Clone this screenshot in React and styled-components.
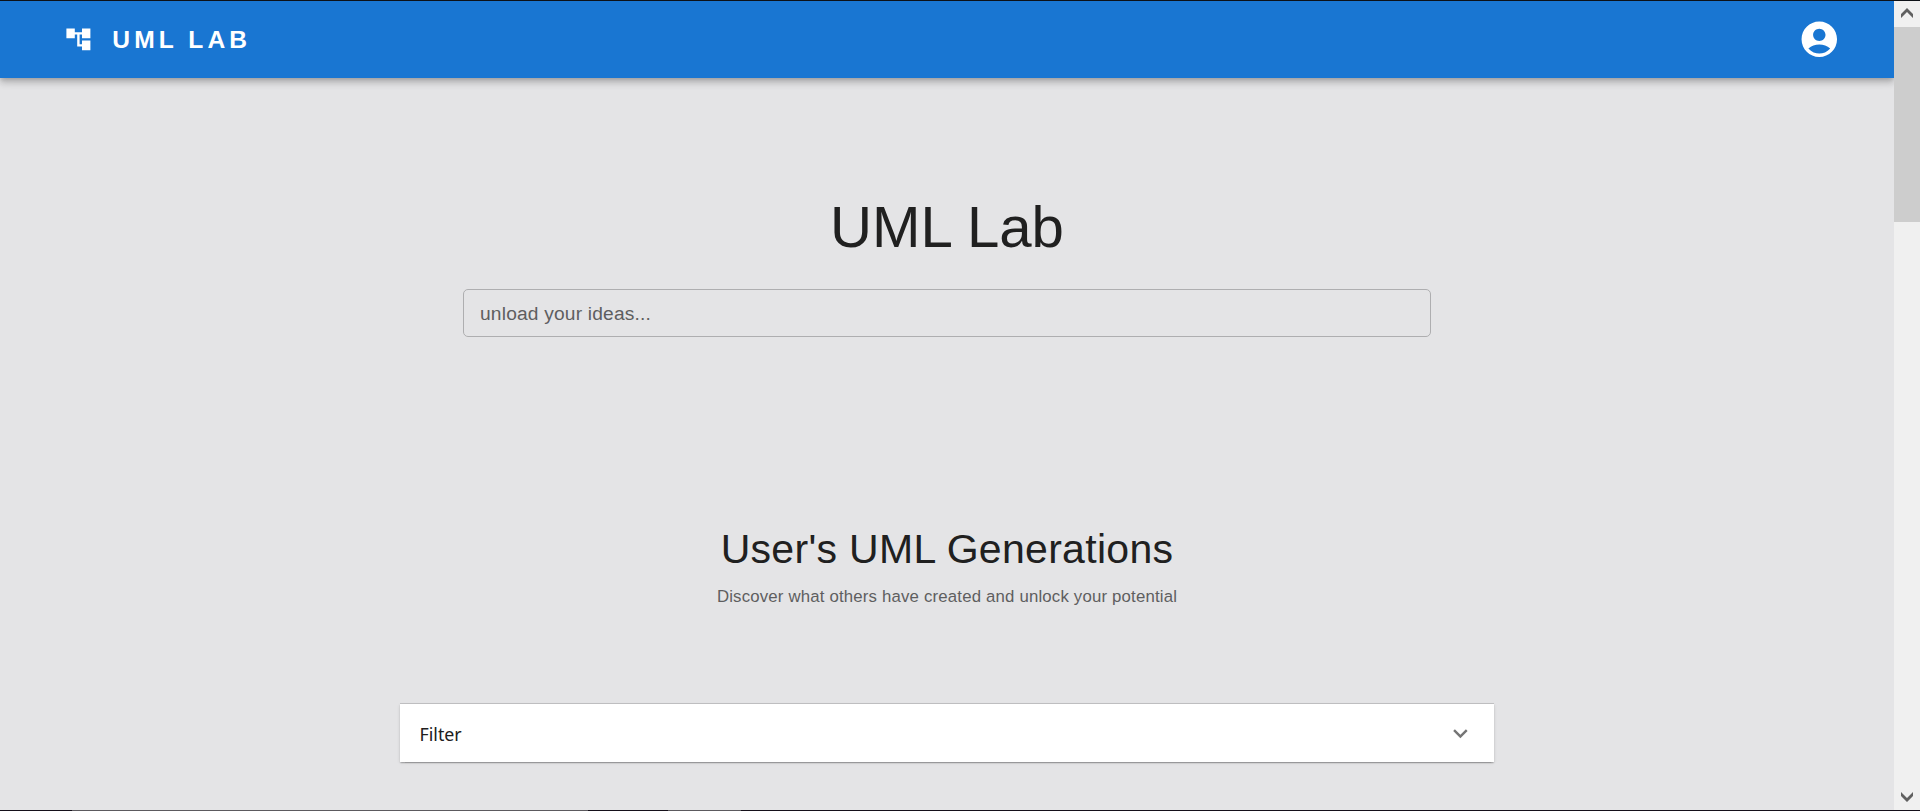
import React from "react";
import styled, { createGlobalStyle } from "styled-components";

const GlobalStyle = createGlobalStyle`
  *, *::before, *::after { box-sizing: border-box; }
  body {
    margin: 0;
    background: #e4e4e6;
    color: #202020;
    font-family: Arial, "Liberation Sans", sans-serif;
    overflow: hidden;
  }
`;

const Frame = styled.div`
  display: flex;
  flex-direction: column;
  height: 811px;
`;

const TopEdge = styled.div`
  flex: none;
  height: 1px;
  background: #0d1117;
`;

const BottomEdge = styled.div`
  flex: none;
  display: flex;
  height: 1px;
  background: #15101a;
`;

const EdgeSegment = styled.span`
  width: ${({ $width }) => $width}px;
  background: ${({ $lit }) => ($lit ? "#5c5a5e" : "transparent")};
`;

const Viewport = styled.div`
  flex: 1;
  display: flex;
  min-height: 0;
`;

const Page = styled.div`
  flex: 1;
  display: flex;
  flex-direction: column;
  min-width: 0;
  overflow: hidden;
`;

const AppBar = styled.header`
  flex: none;
  display: flex;
  align-items: center;
  justify-content: space-between;
  height: 77px;
  padding: 0 53.5px 1px 64px;
  background: #1976d2;
  color: #fff;
  box-shadow: 0 2.4px 4.8px -1.2px rgba(0, 0, 0, 0.2),
    0 4.8px 6px rgba(0, 0, 0, 0.14), 0 1.2px 12px rgba(0, 0, 0, 0.12);
`;

const Brand = styled.div`
  display: flex;
  align-items: center;
  gap: 19.5px;
`;

const BrandName = styled.span`
  padding-top: 1px;
  font-size: 24.6px;
  font-weight: 700;
  line-height: 38px;
  letter-spacing: 4.1px;
`;

const Icon = styled.svg`
  display: block;
  flex: none;
  width: ${({ $size }) => $size}px;
  height: ${({ $size }) => $size}px;
  fill: currentColor;
`;

const Hero = styled.section`
  display: flex;
  flex-direction: column;
  align-items: center;
  padding-top: 115px;
`;

const HeroTitle = styled.h1`
  margin: 0;
  font-size: 58.2px;
  font-weight: 400;
  line-height: 67px;
`;

const IdeaInput = styled.input`
  width: 968px;
  height: 48px;
  margin-top: 29px;
  padding: 2px 16px 0;
  border: 1px solid #aeaeb0;
  border-radius: 5px;
  background: transparent;
  font: 19.2px Arial, "Liberation Sans", sans-serif;
  letter-spacing: 0.18px;
  outline: none;
  &::placeholder {
    color: #5e5e5f;
    opacity: 1;
  }
`;

const Gallery = styled.section`
  display: flex;
  flex-direction: column;
  align-items: center;
  padding-top: 187px;
`;

const GalleryTitle = styled.h2`
  margin: 0;
  font-size: 41px;
  font-weight: 400;
  line-height: 50px;
  letter-spacing: 0.3px;
`;

const GalleryText = styled.p`
  margin: 11px 0 0;
  color: #5e5e5f;
  font-size: 16.8px;
  line-height: 24px;
  letter-spacing: 0.18px;
`;

const FilterPanel = styled.div`
  display: flex;
  align-items: center;
  justify-content: space-between;
  width: 1094px;
  height: 58px;
  margin-top: 95px;
  padding: 0 19px 0 19.5px;
  background: #fff;
  box-shadow: 0 2.4px 1.2px -1.2px rgba(0, 0, 0, 0.2),
    0 1.2px 1.2px rgba(0, 0, 0, 0.14), 0 1.2px 3.6px rgba(0, 0, 0, 0.12),
    0 -1px 0 #c2c2c4;
`;

const FilterLabel = styled.span`
  font-family: "Segoe UI", "Noto Sans", sans-serif;
  font-size: 17.8px;
  line-height: 29px;
  padding-top: 3px;
`;

const Chevron = styled(Icon)`
  color: #757575;
`;

const Scrollbar = styled.aside`
  flex: none;
  display: flex;
  flex-direction: column;
  width: 26px;
  background: #f0f0f0;
  color: #606060;
`;

const ScrollButton = styled.div`
  display: flex;
  align-items: center;
  justify-content: center;
  height: 26px;
  padding-bottom: ${({ $raise }) => $raise || 0}px;
`;

const ScrollThumb = styled.div`
  height: 195px;
  margin-bottom: auto;
  background: #cdcdcd;
`;

const Arrow = ({ d }) => (
  <svg width="12" height="10" viewBox="0 0 12 10" fill="currentColor">
    <path d={d} />
  </svg>
);

export default function App() {
  return (
    <Frame>
      <GlobalStyle />
      <TopEdge />
      <Viewport>
        <Page>
          <AppBar>
            <Brand>
              <Icon $size={28.8} viewBox="0 0 24 24">
                <path d="M22 11V3h-7v3H9V3H2v8h7V8h2v10h4v3h7v-8h-7v3h-2V8h2v3z" />
              </Icon>
              <BrandName>UML LAB</BrandName>
            </Brand>
            <Icon $size={42.6} viewBox="0 0 24 24">
              <path d="M12 2C6.48 2 2 6.48 2 12s4.48 10 10 10 10-4.48 10-10S17.52 2 12 2zm0 4c1.93 0 3.5 1.57 3.5 3.5S13.93 13 12 13s-3.5-1.57-3.5-3.5S10.07 6 12 6zm0 14c-2.03 0-4.43-.82-6.14-2.88C7.55 15.8 9.68 15 12 15s4.45.8 6.14 2.12C16.43 19.18 14.03 20 12 20z" />
            </Icon>
          </AppBar>
          <Hero>
            <HeroTitle>UML Lab</HeroTitle>
            <IdeaInput placeholder="unload your ideas..." />
          </Hero>
          <Gallery>
            <GalleryTitle>User's UML Generations</GalleryTitle>
            <GalleryText>
              Discover what others have created and unlock your potential
            </GalleryText>
            <FilterPanel>
              <FilterLabel>Filter</FilterLabel>
              <Chevron $size={28.8} viewBox="0 0 24 24">
                <path d="M16.59 8.59 12 13.17 7.41 8.59 6 10l6 6 6-6z" />
              </Chevron>
            </FilterPanel>
          </Gallery>
        </Page>
        <Scrollbar>
          <ScrollButton $raise={2}>
            <Arrow d="M6 0 12 6V10L6 4 0 10V6z" />
          </ScrollButton>
          <ScrollThumb />
          <ScrollButton>
            <Arrow d="M6 10 12 4V0L6 6 0 0V4z" />
          </ScrollButton>
        </Scrollbar>
      </Viewport>
      <BottomEdge>
        <EdgeSegment $width={72} />
        <EdgeSegment $width={516} $lit />
        <EdgeSegment $width={80} />
        <EdgeSegment $width={73} $lit />
      </BottomEdge>
    </Frame>
  );
}
